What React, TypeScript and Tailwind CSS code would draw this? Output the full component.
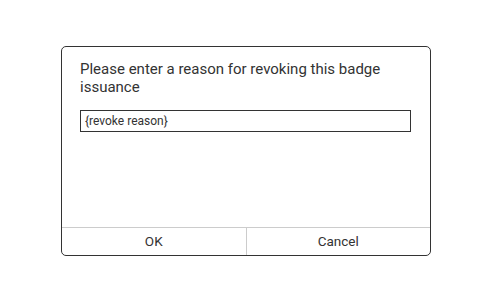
export default function App() {
  return (
    <div
      className="w-[492px] h-[302px] bg-white flex items-start justify-center pt-[46px]"
      style={{ fontFamily: 'Roboto, "Liberation Sans", sans-serif' }}
    >
      <div className="w-[370px] h-[210px] border border-[#333] rounded-[5px] flex flex-col overflow-hidden">
        <div className="flex-1 px-[18px] pt-[13px]">
          <p className="text-[15px] leading-[18px] text-[#333]">
            Please enter a reason for revoking this badge issuance
          </p>
          <input
            className="mt-[14px] w-[331px] h-[22px] border border-[#333] px-[4px] text-[12px] text-[#333] outline-none"
            defaultValue="{revoke reason}"
          />
        </div>
        <div className="h-[28px] border-t border-[#ccc] flex">
          <button className="flex-1 text-[13.5px] text-[#333]">OK</button>
          <button className="flex-1 text-[13.5px] text-[#333] border-l border-[#ccc]">Cancel</button>
        </div>
      </div>
    </div>
  );
}
